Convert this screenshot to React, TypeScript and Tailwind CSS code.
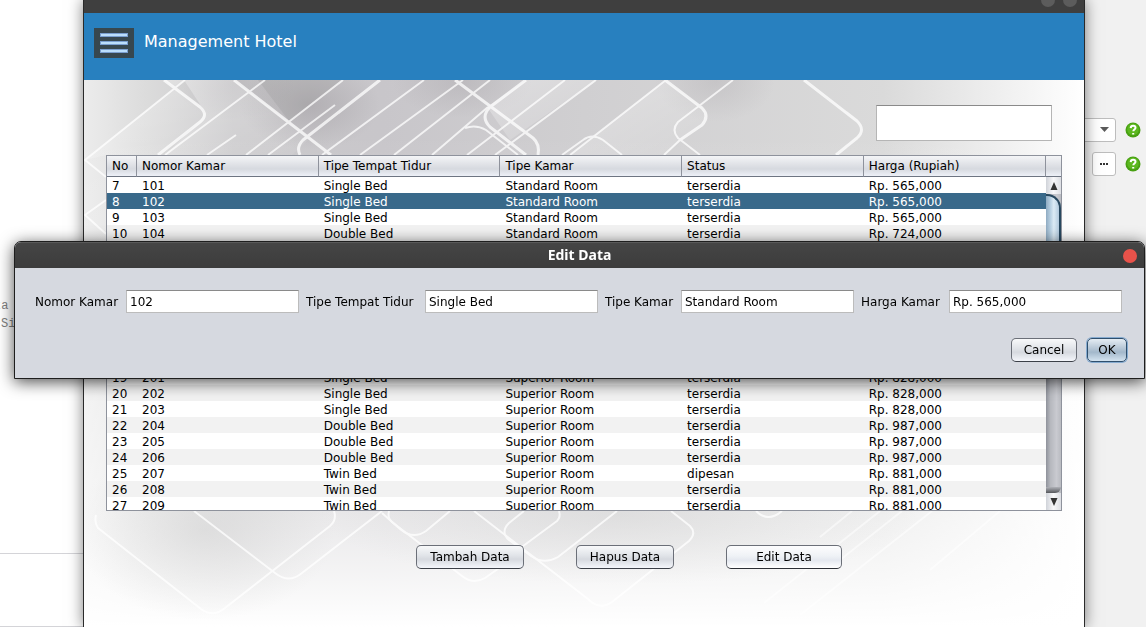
import { useState } from "react";

type Room = [string, string, string, string, string];

const rooms: Room[] = [
  ["101", "Single Bed", "Standard Room", "terserdia", "Rp. 565,000"],
  ["102", "Single Bed", "Standard Room", "terserdia", "Rp. 565,000"],
  ["103", "Single Bed", "Standard Room", "terserdia", "Rp. 565,000"],
  ["104", "Double Bed", "Standard Room", "terserdia", "Rp. 724,000"],
  ["105", "Double Bed", "Standard Room", "terserdia", "Rp. 724,000"],
  ["106", "Double Bed", "Standard Room", "terserdia", "Rp. 724,000"],
  ["107", "Twin Bed", "Standard Room", "terserdia", "Rp. 618,000"],
  ["108", "Twin Bed", "Standard Room", "terserdia", "Rp. 618,000"],
  ["109", "Twin Bed", "Standard Room", "terserdia", "Rp. 618,000"],
  ["110", "Twin Bed", "Standard Room", "terserdia", "Rp. 618,000"],
  ["111", "Twin Bed", "Standard Room", "terserdia", "Rp. 618,000"],
  ["112", "Twin Bed", "Standard Room", "terserdia", "Rp. 618,000"],
  ["201", "Single Bed", "Superior Room", "terserdia", "Rp. 828,000"],
  ["202", "Single Bed", "Superior Room", "terserdia", "Rp. 828,000"],
  ["203", "Single Bed", "Superior Room", "terserdia", "Rp. 828,000"],
  ["204", "Double Bed", "Superior Room", "terserdia", "Rp. 987,000"],
  ["205", "Double Bed", "Superior Room", "terserdia", "Rp. 987,000"],
  ["206", "Double Bed", "Superior Room", "terserdia", "Rp. 987,000"],
  ["207", "Twin Bed", "Superior Room", "dipesan", "Rp. 881,000"],
  ["208", "Twin Bed", "Superior Room", "terserdia", "Rp. 881,000"],
  ["209", "Twin Bed", "Superior Room", "terserdia", "Rp. 881,000"],
];

const FIRST_NUMBER = 7;
const columns = ["No", "Nomor Kamar", "Tipe Tempat Tidur", "Tipe Kamar", "Status", "Harga (Rupiah)"];

const headerFill = "bg-[linear-gradient(#f4f5f7_0%,#dfe1e6_45%,#d6d9df_65%,#eef1f8_100%)]";

function Backdrop() {
  return (
    <svg
      className="absolute inset-0 size-full"
      viewBox="84 80 1000 547"
      preserveAspectRatio="none"
      aria-hidden="true"
    >
      <defs>
        <linearGradient id="base" x1="0" x2="1" y1="0" y2="0">
          <stop offset="0" stopColor="#ececec" />
          <stop offset="0.06" stopColor="#dcdcdc" />
          <stop offset="0.15" stopColor="#c9c8ca" />
          <stop offset="0.3" stopColor="#c8c6ca" />
          <stop offset="0.5" stopColor="#d0cfd1" />
          <stop offset="0.8" stopColor="#dadada" />
          <stop offset="0.92" stopColor="#f0f0f0" />
          <stop offset="1" stopColor="#ffffff" />
        </linearGradient>
        <linearGradient id="fade" x1="0" x2="0" y1="0" y2="1">
          <stop offset="0.1" stopColor="#fff" stopOpacity="0" />
          <stop offset="0.76" stopColor="#fff" stopOpacity="0.55" />
          <stop offset="0.9" stopColor="#fff" stopOpacity="0.8" />
          <stop offset="1" stopColor="#fff" stopOpacity="1" />
        </linearGradient>
        <radialGradient id="glow">
          <stop offset="0" stopColor="#9c989d" stopOpacity="0.5" />
          <stop offset="1" stopColor="#9c989d" stopOpacity="0" />
        </radialGradient>
        <radialGradient id="low">
          <stop offset="0" stopColor="#c4c4c4" stopOpacity="0.4" />
          <stop offset="1" stopColor="#c4c4c4" stopOpacity="0" />
        </radialGradient>
        <linearGradient id="sheen" x1="0" x2="1" y1="0" y2="1">
          <stop offset="0" stopColor="#fff" stopOpacity="0.35" />
          <stop offset="1" stopColor="#fff" stopOpacity="0.05" />
        </linearGradient>
      </defs>
      <rect x="84" y="80" width="1000" height="547" fill="url(#base)" />
      <ellipse cx="310" cy="105" rx="70" ry="45" fill="url(#glow)" />
      <ellipse cx="462" cy="82" rx="70" ry="36" fill="url(#glow)" opacity="0.6" />
      <ellipse cx="715" cy="82" rx="60" ry="40" fill="url(#glow)" opacity="0.5" />
      <ellipse cx="235" cy="84" rx="60" ry="36" fill="url(#glow)" opacity="0.5" />
      <g fill="url(#sheen)">
        <path d="M164 80 200 107Q208 114 200 121L158 155H106L85 160 185 80Z" />
        <path d="M184 80H234L310 138 292 155H165L200 121 205 112Z" />
        <path d="M665 80 702 108Q710 116 701 124L664 155H570L666 80Z" />
        <path d="M565 80H596L510 140 487 107 526 80Z" />
      </g>
      <path d="M258 80H343L289 121Z" fill="#8d8a8e" opacity="0.2" />
      <rect x="84" y="80" width="1000" height="547" fill="url(#fade)" />
      <ellipse cx="205" cy="530" rx="130" ry="90" fill="url(#low)" />
      <ellipse cx="620" cy="515" rx="300" ry="70" fill="url(#low)" opacity="0.9" />
      <g fill="none" stroke="#fff" strokeWidth="2" strokeLinejoin="round" opacity="0.75">
        <path d="M185 80 85 160 106 177" />
        <path d="M106 200 85 215 106 234" />
        <path d="M164 80 200 107Q209 115 200 122L158 155" strokeWidth="3" />
        <path d="M265 80 165 155M207 155 236 135" />
        <path d="M234 80 331 155" strokeWidth="3" />
        <path d="M343 80 246 155M268 155 335 105" />
        <path d="M380 80 303 140Q296 147 300 155" strokeWidth="3" />
        <path d="M424 80 322 155M463 80 360 155M490 80 394 155" />
        <path d="M455 80 533 138Q540 144 538 155" strokeWidth="3" />
        <path d="M526 80 490 107Q480 117 490 127L526 155" strokeWidth="3" />
        <path d="M565 80 467 155M596 80 495 155M666 80 570 155" />
        <path d="M488 107 432 155M465 128Q476 124 486 130L518 155" strokeWidth="2" />
        <path d="M562 155 583 140Q592 133 603 140L622 155" />
        <path d="M665 80 702 108Q710 116 702 125L680 140" strokeWidth="3" />
        <path d="M733 80 678 122Q671 130 678 138L700 155M680 140 664 155" />
        <path d="M804 80 857 121Q866 130 857 138L836 155" strokeWidth="3" />
        <path d="M194 511 275 573Q289 584 302 573L382 511" />
        <path d="M334 511Q337 520 330 526L225 608Q213 618 201 609L98 528Q94 522 96 515" />
        <path d="M382 513 400 529Q413 540 426 531L450 511" />
        <path d="M389 511Q387 518 392 522L462 576Q473 585 485 578L505 564" />
        <path d="M474 511 588 599Q600 611 612 602L689 541Q697 533 690 526L671 511" />
        <path d="M524 511 509 523Q500 532 509 540L531 556Q544 565 558 557L617 511" />
        <path d="M559 511Q561 517 557 521L515 552" />
        <path d="M756 511Q768 523 782 511" />
        <path d="M852 511 820 537M880 511 764 603M902 511 840 560M932 511 800 615M1000 511 930 570" opacity="0.7" />
      </g>
    </svg>
  );
}

function HelpIcon() {
  return (
    <svg width="16" height="16" viewBox="0 0 16 16" aria-hidden="true">
      <circle cx="8" cy="8" r="7.5" fill="#48a012" />
      <circle cx="8" cy="7.4" r="5.8" fill="#5cb81f" />
      <path
        d="M5.700 6.100C5.800 4.500 6.800 3.800 8.100 3.800c1.400 0 2.400.8 2.400 2 0 1.700-2.200 1.800-2.200 3.500M8.200 10.900v1.700"
        fill="none"
        stroke="#fff"
        strokeWidth="2"
      />
    </svg>
  );
}

function Editor() {
  return (
    <div className="flex min-h-screen justify-between bg-white">
      <div className="flex w-[84px] flex-col">
        <div className="flex h-[553px] flex-col pt-[297px] font-['Liberation_Mono',monospace] text-[12px] leading-[18px] text-[#808080]">
          <span className="-ml-1.5">ta</span>
          <span className="pl-px">Si</span>
        </div>
        <div className="h-[74px] border-y border-[#d4d4d8]" />
      </div>
      <div className="flex w-[72px] flex-col gap-[10px] bg-[#f1f1f1] pt-[118px]">
        <div className="flex h-6 items-center justify-between pr-[5px]">
          <button
            aria-label="Pilihan"
            className="flex h-6 w-[42px] items-center justify-end rounded-[3px] border border-[#bdbdbd] bg-white pr-[6px]"
          >
            <svg width="9" height="6" viewBox="0 0 9 6" aria-hidden="true">
              <path d="M0 0h9L4.500 5z" fill="#5a5a5a" />
            </svg>
          </button>
          <HelpIcon />
        </div>
        <div className="flex h-6 items-center justify-end gap-[9px] pr-[5px]">
          <button
            aria-label="Lainnya"
            className="flex size-6 items-center justify-center gap-px rounded-[3px] border border-[#bdbdbd] bg-white"
          >
            <span className="size-[2px] bg-[#333]" />
            <span className="size-[2px] bg-[#333]" />
            <span className="size-[2px] bg-[#333]" />
          </button>
          <HelpIcon />
        </div>
      </div>
    </div>
  );
}

function Scrollbar() {
  return (
    <div className="flex w-[15px] flex-col bg-[#d9dade]">
      <div className={`h-[21px] border-b border-[#6e7582] ${headerFill}`} />
      <button
        aria-label="Gulir ke atas"
        className="flex h-[17px] items-center justify-center bg-[linear-gradient(90deg,#d0d3d9,#f8f8fa,#dcdee3)]"
      >
        <svg width="8" height="8" viewBox="0 0 8 8" aria-hidden="true">
          <path d="M4 0 7.500 8H.5z" fill="#333" />
        </svg>
      </button>
      <div className="flex flex-1 flex-col bg-[linear-gradient(90deg,#8f929b,#b6b8be_30%,#c9cad0_70%,#b9bbc1)]">
        <div className="h-[150px] rounded-tr-[14px] border-t-2 border-r-2 border-[#28485f] bg-[linear-gradient(90deg,#8fabc2,#b8d0e2_35%,#dcebf5_60%,#b2cade)]" />
        <div className="flex-1" />
        <div className="h-[6px] rounded-br-[8px] bg-[linear-gradient(#b0b2b8,#55575c)]" />
      </div>
      <button
        aria-label="Gulir ke bawah"
        className="flex h-[17px] items-center justify-center bg-[linear-gradient(90deg,#d0d3d9,#f8f8fa,#dcdee3)]"
      >
        <svg width="8" height="8" viewBox="0 0 8 8" aria-hidden="true">
          <path d="M4 8 7.500 0H.5z" fill="#333" />
        </svg>
      </button>
    </div>
  );
}

const cell = "h-4 p-0 pt-[2px] pl-[5px] leading-[14px] whitespace-nowrap";

function RoomTable({ selected, onSelect }: { selected: string; onSelect: (room: string) => void }) {
  return (
    <div className="flex h-[356px] overflow-hidden border border-[#8e929c] bg-white">
      <div className="min-w-0 flex-1">
        <table className="w-full table-fixed border-separate border-spacing-0 text-left">
          <colgroup>
            <col className="w-[30px]" />
            <col className="w-[19.35%]" />
            <col className="w-[19.35%]" />
            <col className="w-[19.35%]" />
            <col className="w-[19.35%]" />
            <col />
          </colgroup>
          <thead>
            <tr>
              {columns.map((name) => (
                <th
                  key={name}
                  className={`h-[21px] border-r border-b border-r-[#8e929c] border-b-[#6e7582] p-0 pl-[5px] leading-4 font-normal whitespace-nowrap ${headerFill}`}
                >
                  {name}
                </th>
              ))}
            </tr>
          </thead>
          <tbody>
            {rooms.map((room, i) => (
              <tr
                key={room[0]}
                onClick={() => onSelect(room[0])}
                className={
                  room[0] === selected
                    ? "bg-[#39698a] text-white"
                    : i % 2 === 1
                      ? "bg-[#f2f2f2]"
                      : "bg-white"
                }
              >
                <td className={cell}>{FIRST_NUMBER + i}</td>
                {room.map((value, j) => (
                  <td key={j} className={cell}>
                    {value}
                  </td>
                ))}
              </tr>
            ))}
          </tbody>
        </table>
      </div>
      <Scrollbar />
    </div>
  );
}

const pushButton =
  "h-6 rounded-[5px] border border-[#6b6f78] border-b-[#3c4048] bg-[linear-gradient(#f8f9fa,#e0e3e8_45%,#d6d9df_60%,#f4f6fb)]";

function HotelWindow() {
  const [selected, setSelected] = useState("102");
  return (
    <section className="absolute inset-y-0 right-[61px] left-[83px] flex flex-col border-x border-[#2a2a2a] shadow-[0_0_14px_rgba(0,0,0,0.5)]">
      <div className="flex h-[13px] shrink-0 items-start justify-end gap-2 overflow-hidden bg-[#3f3f3f] pr-[7px]">
        <span className="-mt-[7px] size-[14px] rounded-full bg-[#5c5c5c]" />
        <span className="-mt-[7px] size-[14px] rounded-full bg-[#5c5c5c]" />
      </div>
      <header className="flex h-[67px] shrink-0 items-start gap-[10px] bg-[#2880bf] px-[10px] pt-[15px]">
        <button aria-label="Menu" className="flex h-[30px] w-10 flex-col items-center justify-center gap-1 bg-[#37474f]">
          <span className="h-1 w-7 border border-[#7a9fd0] bg-[#bbdefb]" />
          <span className="h-1 w-7 border border-[#7a9fd0] bg-[#bbdefb]" />
          <span className="h-1 w-7 border border-[#7a9fd0] bg-[#bbdefb]" />
        </button>
        <h1 className="text-[16px] leading-[28px] text-white">Management Hotel</h1>
      </header>
      <div className="relative flex-1 bg-white">
        <Backdrop />
        <div className="relative flex flex-col px-[22px] pt-[25px]">
          <input
            aria-label="Cari"
            className="mr-[10px] h-9 w-[176px] self-end border border-[#b5b5b5] border-t-[#8a8a8a] bg-white px-1 outline-none"
          />
          <div className="mt-[14px]">
            <RoomTable selected={selected} onSelect={setSelected} />
          </div>
          <div className="mt-[34px] flex justify-center pl-[90px]">
            <button className={`${pushButton} w-[108px]`}>Tambah Data</button>
            <button className={`${pushButton} ml-[52px] w-[98px]`}>Hapus Data</button>
            <button className="ml-[52px] h-6 w-[116px] rounded-[5px] border border-[#6b6f78] border-b-[#2c2f36] bg-[linear-gradient(#fdfdfe,#eff2f6_45%,#e4e8ef_65%,#ffffff)]">
              Edit Data
            </button>
          </div>
        </div>
      </div>
    </section>
  );
}

const fields = [
  { id: "nomor", label: "Nomor Kamar", value: "102", labelWidth: "w-[84px]" },
  { id: "tidur", label: "Tipe Tempat Tidur", value: "Single Bed", labelWidth: "w-[112px]" },
  { id: "tipe", label: "Tipe Kamar", value: "Standard Room", labelWidth: "w-[69px]" },
  { id: "harga", label: "Harga Kamar", value: "Rp. 565,000", labelWidth: "w-[81px]" },
];

function EditDialog() {
  return (
    <section
      role="dialog"
      aria-labelledby="dialog-title"
      className="absolute top-[241px] right-px left-[14px] flex flex-col overflow-hidden rounded-t-[7px] border border-[#1e1e1e] bg-[#d6d9e0] shadow-[0_3px_16px_rgba(0,0,0,0.7)]"
    >
      <div className="flex h-[26px] items-center border-t border-[#5a5a5a] bg-[linear-gradient(#454545,#3c3c3c)] pr-[7px] pl-[21px]">
        <h2
          id="dialog-title"
          className="flex-1 pb-[2px] text-center font-['Noto_Sans',sans-serif] text-[14px] leading-5 font-bold text-white"
        >
          Edit Data
        </h2>
        <button aria-label="Tutup" className="size-[14px] rounded-full bg-[#e9524a]" />
      </div>
      <form onSubmit={(e) => e.preventDefault()} className="pr-[17px] pb-4 pl-[20px]">
        <div className="flex gap-[7px] pt-[22px] pr-[5px]">
          {fields.map((field) => (
            <div key={field.id} className="flex flex-auto items-center gap-[7px]">
              <label htmlFor={field.id} className={`shrink-0 whitespace-nowrap ${field.labelWidth}`}>
                {field.label}
              </label>
              <input
                id={field.id}
                defaultValue={field.value}
                className="h-[23px] min-w-0 flex-1 basis-[173px] border border-[#bcbcbc] border-t-[#8a8a8a] bg-white px-[3px] outline-none"
              />
            </div>
          ))}
        </div>
        <div className="mt-[25px] flex justify-end gap-[10px]">
          <button type="button" className={`${pushButton} w-[66px]`}>
            Cancel
          </button>
          <button
            type="submit"
            className="h-6 w-10 rounded-[5px] border border-[#2f4f6d] bg-[linear-gradient(#e4ecf3,#b3c4d4_45%,#a3b8cb_60%,#d3e3f0)] shadow-[0_0_0_1px_#86abd0]"
          >
            OK
          </button>
        </div>
      </form>
    </section>
  );
}

export default function App() {
  return (
    <main className="relative min-h-screen overflow-hidden font-['DejaVu_Sans',sans-serif] text-[12px] leading-4 text-black">
      <Editor />
      <HotelWindow />
      <EditDialog />
    </main>
  );
}
